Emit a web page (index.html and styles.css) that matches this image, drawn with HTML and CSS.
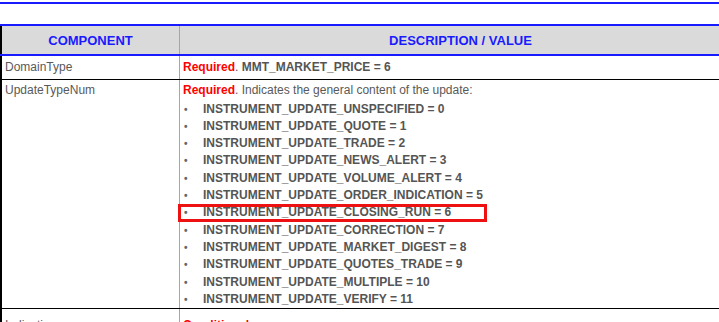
FILE: index.html
```html
<!DOCTYPE html>
<html lang="en">
<head>
    <meta charset="UTF-8">
    <meta name="viewport" content="width=device-width, initial-scale=1.0">
    <title>Update Message Components</title>
    <link rel="stylesheet" href="styles.css">
</head>
<body>
    <div class="top-rule"></div>

    <table class="spec">
        <thead>
            <tr>
                <th class="col-name">COMPONENT</th>
                <th class="col-desc">DESCRIPTION / VALUE</th>
            </tr>
        </thead>
        <tbody>
            <tr class="short">
                <td class="col-name">DomainType</td>
                <td><span class="req">Required</span>. <b>MMT_MARKET_PRICE = 6</b></td>
            </tr>
            <tr class="long">
                <td class="col-name">UpdateTypeNum</td>
                <td>
                    <span class="req">Required</span>. Indicates the general content of the update:
                    <ul class="values">
                        <li>INSTRUMENT_UPDATE_UNSPECIFIED = 0</li>
                        <li>INSTRUMENT_UPDATE_QUOTE = 1</li>
                        <li>INSTRUMENT_UPDATE_TRADE = 2</li>
                        <li>INSTRUMENT_UPDATE_NEWS_ALERT = 3</li>
                        <li>INSTRUMENT_UPDATE_VOLUME_ALERT = 4</li>
                        <li>INSTRUMENT_UPDATE_ORDER_INDICATION = 5</li>
                        <li class="marked">INSTRUMENT_UPDATE_CLOSING_RUN = 6</li>
                        <li>INSTRUMENT_UPDATE_CORRECTION = 7</li>
                        <li>INSTRUMENT_UPDATE_MARKET_DIGEST = 8</li>
                        <li>INSTRUMENT_UPDATE_QUOTES_TRADE = 9</li>
                        <li>INSTRUMENT_UPDATE_MULTIPLE = 10</li>
                        <li>INSTRUMENT_UPDATE_VERIFY = 11</li>
                    </ul>
                </td>
            </tr>
            <tr class="next">
                <td class="col-name">Indication</td>
                <td><span class="req">Conditional</span></td>
            </tr>
        </tbody>
    </table>
</body>
</html>
```

FILE: styles.css
```css
body {
    margin: 0;
    font-family: "Liberation Sans", Arial, sans-serif;
    font-size: 12px;
    color: #595959;
    overflow: hidden;
}
.top-rule {
    margin-top: 2px;
    border-top: 2px solid #1a1aff;
}
.spec {
    margin-top: 20px;
    width: 719px;
    border-collapse: collapse;
    border-left: 2px solid #000;
}
th {
    height: 28px;
    padding: 0;
    background-color: #d9dad9;
    color: #1a1aff;
    font-size: 13px;
    font-weight: bold;
    text-align: center;
    border-top: 2px solid #1a1aff;
    border-bottom: 2px solid #1a1aff;
    border-left: 1px solid #a6a6a6;
}
th.col-name {
    border-left: 2px solid #000;
}
th.col-desc {
    padding-left: 22px;
}
td {
    padding: 1px 3px 0;
    line-height: 17.3px;
    vertical-align: top;
    border-left: 1px solid #a6a6a6;
    border-bottom: 1px solid #000;
}
td.col-name {
    width: 171px;
    border-left: 2px solid #000;
}
tr.short td {
    padding-top: 3px;
    padding-bottom: 3px;
}
tr.long td {
    padding-top: 2px;
}
tr.next td {
    padding-top: 8px;
}
.req {
    color: #ff0000;
    font-weight: bold;
}
b {
    color: #555;
}
.values {
    list-style: none;
    margin: 1px 0 0;
    padding: 0;
    font-weight: bold;
    color: #555;
}
.values li {
    position: relative;
}
.values li::before {
    content: "\2022";
    display: inline-block;
    width: 19px;
    padding-left: 1px;
    font-size: 10px;
    color: #666;
}
.values li.marked::after {
    content: "";
    position: absolute;
    left: -5px;
    top: 0;
    width: 303px;
    height: 12px;
    border: 3px solid #ee1111;
}
```
